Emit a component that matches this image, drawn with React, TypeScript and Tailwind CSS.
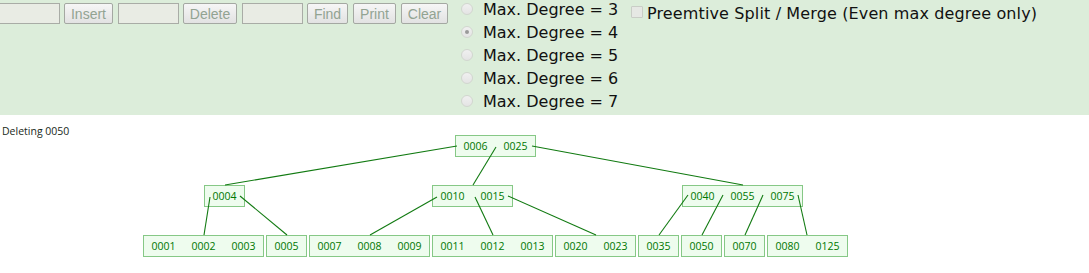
import React from "react";

type TreeNode = { x: number; y: number; keys: string[] };
type Edge = [number, number, number, number];

const nodes: TreeNode[] = [
  { x: 455, y: 135, keys: ["0006", "0025"] },
  { x: 204, y: 185, keys: ["0004"] },
  { x: 432, y: 185, keys: ["0010", "0015"] },
  { x: 682, y: 185, keys: ["0040", "0055", "0075"] },
  { x: 143, y: 235, keys: ["0001", "0002", "0003"] },
  { x: 266, y: 235, keys: ["0005"] },
  { x: 309, y: 235, keys: ["0007", "0008", "0009"] },
  { x: 432, y: 235, keys: ["0011", "0012", "0013"] },
  { x: 555, y: 235, keys: ["0020", "0023"] },
  { x: 638, y: 235, keys: ["0035"] },
  { x: 681, y: 235, keys: ["0050"] },
  { x: 724, y: 235, keys: ["0070"] },
  { x: 767, y: 235, keys: ["0080", "0125"] },
];

const edges: Edge[] = [
  [457, 146, 225, 185],
  [496, 147, 473, 185],
  [532, 146, 743, 185],
  [210, 197, 204, 235],
  [240, 196, 287, 235],
  [437, 197, 370, 235],
  [475, 197, 493, 235],
  [508, 196, 596, 235],
  [688, 195, 659, 235],
  [723, 195, 702, 235],
  [763, 195, 745, 235],
  [798, 195, 807, 235],
];

const TextBox = ({ className = "" }: { className?: string }) => (
  <input
    type="text"
    className={
      "w-[61px] h-[21px] bg-[#e9ece4] border border-[#a9aca6] outline-none " +
      className
    }
  />
);

const Btn = ({ label, className = "" }: { label: string; className?: string }) => (
  <button
    className={
      "h-[21px] rounded-[2px] border border-[#a4a8a2] bg-gradient-to-b from-[#f6f6f6] to-[#e2e2e2] text-[14px] leading-none text-[#92a392] font-['Liberation_Sans',Arial,sans-serif] " +
      className
    }
  >
    {label}
  </button>
);

const Radio = ({ checked }: { checked?: boolean }) => (
  <span className="mt-[3px] ml-[6px] w-[12px] h-[12px] rounded-full border border-[#d2d6cf] bg-gradient-to-b from-[#f0f0f0] to-[#e4e4e4] flex items-center justify-center shrink-0">
    {checked && <span className="w-[4px] h-[4px] rounded-full bg-[#9a9a9a]" />}
  </span>
);

export default function App() {
  const degrees = [3, 4, 5, 6, 7];

  return (
    <div className="w-[1089px] h-[273px] bg-white overflow-hidden">
      {/* Controls */}
      <div className="h-[115px] bg-[#dcedda] flex items-start">
        <div className="flex items-center mt-[3px] -ml-px">
          <TextBox />
          <Btn label="Insert" className="ml-[4px] w-[49px]" />
          <TextBox className="ml-[5px]" />
          <Btn label="Delete" className="ml-[4px] w-[54px]" />
          <TextBox className="ml-[5px]" />
          <Btn label="Find" className="ml-[4px] w-[41px]" />
          <Btn label="Print" className="ml-[5px] w-[43px]" />
          <Btn label="Clear" className="ml-[5px] w-[47px]" />
        </div>

        <div className="ml-[7px] w-[176px] flex flex-col font-['DejaVu_Sans',Verdana,sans-serif] text-[16px] text-[#111]">
          {degrees.map((d) => (
            <div key={d} className="h-[23px] flex items-start">
              <Radio checked={d === 4} />
              <span className="ml-[10px] leading-[19px] whitespace-nowrap">
                Max. Degree = {d}
              </span>
            </div>
          ))}
        </div>

        <div className="mt-[4px] flex items-start font-['DejaVu_Sans',Verdana,sans-serif] text-[16px] text-[#111]">
          <span className="mt-[2px] w-[12px] h-[12px] border border-[#c9cdc6] bg-[#e6e8e4] rounded-[1px] shrink-0" />
          <span className="ml-[4px] leading-[19px] whitespace-nowrap tracking-[0.13px]">
            Preemtive Split / Merge (Even max degree only)
          </span>
        </div>
      </div>

      {/* Tree canvas */}
      <svg width={1089} height={158} viewBox="0 115 1089 158" className="block">
        <text
          x={2}
          y={135}
          fontSize="10.5"
          fontFamily="'Open Sans', sans-serif"
          fill="#1a2a1a"
        >
          Deleting 0050
        </text>
        {nodes.map((n, i) => (
          <g key={i}>
            <rect
              x={n.x + 0.5}
              y={n.y + 0.5}
              width={n.keys.length * 40}
              height={21}
              fill="#eefcee"
              stroke="#86c886"
              strokeWidth={1}
            />
            {n.keys.map((k, j) => (
              <text
                key={k}
                x={n.x + 20.5 + j * 40}
                y={n.y + 14.5}
                textAnchor="middle"
                fontSize="10.5"
                fontFamily="'Open Sans', sans-serif"
                fill="#007700"
              >
                {k}
              </text>
            ))}
          </g>
        ))}
        {edges.map(([x1, y1, x2, y2], i) => (
          <line
            key={i}
            x1={x1}
            y1={y1}
            x2={x2}
            y2={y2}
            stroke="#117a11"
            strokeWidth={1.1}
          />
        ))}
      </svg>
    </div>
  );
}
